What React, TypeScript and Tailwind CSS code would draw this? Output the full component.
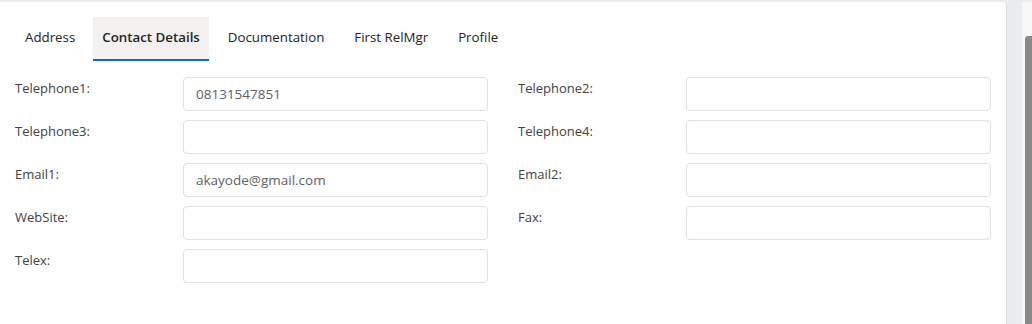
import React from "react";

const tabs = ["Address", "Contact Details", "Documentation", "First RelMgr", "Profile"];

type Field = { label: string; value?: string } | null;

const rows: [Field, Field][] = [
  [{ label: "Telephone1:", value: "08131547851" }, { label: "Telephone2:" }],
  [{ label: "Telephone3:" }, { label: "Telephone4:" }],
  [{ label: "Email1:", value: "akayode@gmail.com" }, { label: "Email2:" }],
  [{ label: "WebSite:" }, { label: "Fax:" }],
  [{ label: "Telex:" }, null],
];

function FieldCell({ f }: { f: Field }) {
  if (!f) return <div />;
  return (
    <div className="flex items-start">
      <label className="w-[168px] shrink-0 pt-[2px] text-[13px] leading-[18px] text-[#424242]">{f.label}</label>
      <input
        readOnly
        value={f.value ?? ""}
        className="h-[34px] w-[305px] rounded-[4px] border border-[#e1e1e1] bg-white px-[12px] text-[13.5px] text-[#616161] outline-none"
        style={{ fontFamily: '"Open Sans", sans-serif' }}
      />
    </div>
  );
}

export default function App() {
  return (
    <div
      className="flex h-[324px] w-[1032px] bg-[#ebecef] pt-[2px] overflow-hidden"
      style={{ fontFamily: '"Open Sans", sans-serif' }}
    >
      <div className="h-[322px] w-[1007px] shrink-0 rounded-tr-[4px] border-r border-[#dcdcdc] bg-white px-[15px] pt-[15px]">
        <div className="flex gap-[8px]">
          {tabs.map((t, i) => {
            const active = t === "Contact Details";
            return (
              <div
                key={t}
                className={
                  active
                    ? "flex h-[44px] items-center border-b-2 border-[#0f6cbd] bg-[#f3f2f1] px-[9px] text-[13.3px] font-semibold text-[#242424]"
                    : i === 0
                      ? "flex h-[44px] items-center border-b-2 border-transparent px-[10px] text-[13.3px] text-[#242424]"
                      : "flex h-[44px] items-center border-b-2 border-transparent px-[11px] text-[13.3px] text-[#242424]"
                }
              >
                {t}
              </div>
            );
          })}
        </div>
        <div className="mt-[16px] grid grid-cols-[473px_473px] gap-x-[30px] gap-y-[9px]">
          {rows.map((r, i) => (
            <React.Fragment key={i}>
              <FieldCell f={r[0]} />
              <FieldCell f={r[1]} />
            </React.Fragment>
          ))}
        </div>
      </div>
      <div className="w-[15px] shrink-0" />
      <div className="flex w-[10px] shrink-0 flex-col bg-[#f8f8f8]">
        <div className="h-[34px]" />
        <div className="ml-[3px] flex-1 rounded-tl-[3px] bg-[#8a8a8a]" />
      </div>
    </div>
  );
}
